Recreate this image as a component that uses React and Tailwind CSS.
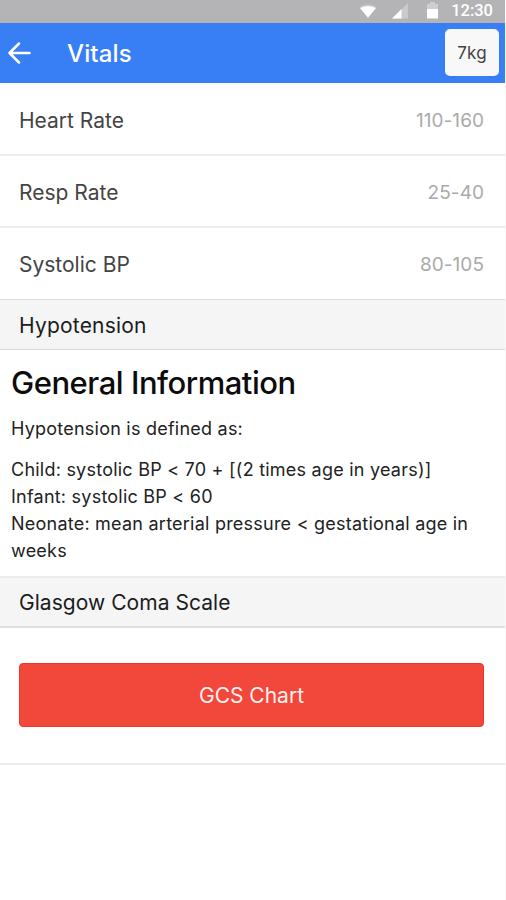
const vitals = [
  { name: "Heart Rate", range: "110-160" },
  { name: "Resp Rate", range: "25-40" },
  { name: "Systolic BP", range: "80-105" },
];

function StatusBar() {
  return (
    <div className="flex h-[23px] items-center justify-end bg-[#b4b4b6] pr-[12px] text-white">
      <svg className="-mt-[2px] mr-[15px] h-[14px] w-[18px]" viewBox="0 0 18 14" fill="currentColor">
        <path d="M0.500 3.200C5.500-.4 12.500-.4 17.500 3.200L9 13.700Z" opacity="0.3" />
        <path d="M1.200 4.200C6 1.600 12 1.600 16.800 4.200L9 13.700Z" />
      </svg>
      <svg className="-mt-[2px] mr-[19px] h-[16px] w-[16px]" viewBox="0 0 16 16" fill="currentColor">
        <path d="M0 15.500L16 0V15.500Z" opacity="0.3" />
        <path d="M0 15.500L9.500 6V15.500Z" />
      </svg>
      <svg className="-mt-[2px] mr-[13px] h-[17px] w-[11px]" viewBox="0 0 11 17" fill="currentColor">
        <path d="M3 0H8V2H11V7H0V2H3Z" opacity="0.35" />
        <path d="M0 7H11V16.500H0Z" />
      </svg>
      <span className="-mt-px font-['Roboto',sans-serif] text-[16.500px] leading-[20px] font-medium">12:30</span>
    </div>
  );
}

export default function App() {
  return (
    <div className="h-[900px] w-[506px] overflow-hidden border-r border-[#f8f8f8] bg-white font-['Inter',sans-serif]">
      <StatusBar />
      <header className="flex h-[60px] items-center bg-[#387ef5] pr-[6px] pl-[8px]">
        <svg className="h-[22px] w-[23px]" viewBox="0 0 23 22" fill="none" stroke="white" strokeWidth="2.500" strokeLinecap="round" strokeLinejoin="round">
          <path d="M11 1.500L1.500 11L11 20.500M1.500 11H21.500" />
        </svg>
        <h1 className="mt-[2px] ml-[36px] text-[24px] leading-[30px] font-medium tracking-[0.15px] text-white">Vitals</h1>
        <button className="mt-[-1px] ml-auto h-[47px] w-[54px] rounded-[5px] bg-[#f8f8f8] pt-[3px] text-[17px] tracking-[0.2px] text-[#444]">7kg</button>
      </header>

      <ul className="pt-px">
        {vitals.map(({ name, range }) => (
          <li key={name} className="flex h-[72px] items-center justify-between border-b-2 border-[#ededed] pt-[3px] pr-[21px] pl-[19px] last:h-[71px] last:border-b-0">
            <span className="text-[21px] text-[#444]">{name}</span>
            <span className="pt-px text-[19px] tracking-[0.050px] text-[#aaa]">{range}</span>
          </li>
        ))}
      </ul>

      <h2 className="flex h-[51px] items-center border-y border-t-[#dcdcdc] border-b-[#dadada] bg-[#f5f5f5] pt-[3px] pl-[19px] text-[21px] tracking-[0.2px] text-[#1c1c1c]">
        Hypotension
      </h2>
      <section className="h-[226px] pt-[13px] pl-[11px] text-[18px] leading-[27px] tracking-[0.230px] text-[#222]">
        <h3 className="text-[31px] leading-[40px] font-medium tracking-[-0.480px] text-[#0c0c0c]">General Information</h3>
        <p className="mt-[12px]">Hypotension is defined as:</p>
        <p className="mt-[14px]">
          Child: systolic BP &lt; 70 + [(2 times age in years)]
          <br />
          Infant: systolic BP &lt; 60
          <br />
          Neonate: mean arterial pressure &lt; gestational age in
          <br />
          weeks
        </p>
      </section>

      <h2 className="flex h-[52px] items-center border-y-2 border-t-[#ebebeb] border-b-[#e0e0e0] bg-[#f5f5f5] pt-[2px] pl-[19px] text-[21px] tracking-[0.050px] text-[#1c1c1c]">
        Glasgow Coma Scale
      </h2>
      <div className="h-[137px] border-b-2 border-[#ededed] pt-[35px] pr-[21px] pl-[19px]">
        <button className="h-[64px] w-full rounded-[4px] border border-[#ee3526] bg-[#f2473b] pt-[2px] text-[21px] text-[#fff0ef]">
          GCS Chart
        </button>
      </div>
    </div>
  );
}
